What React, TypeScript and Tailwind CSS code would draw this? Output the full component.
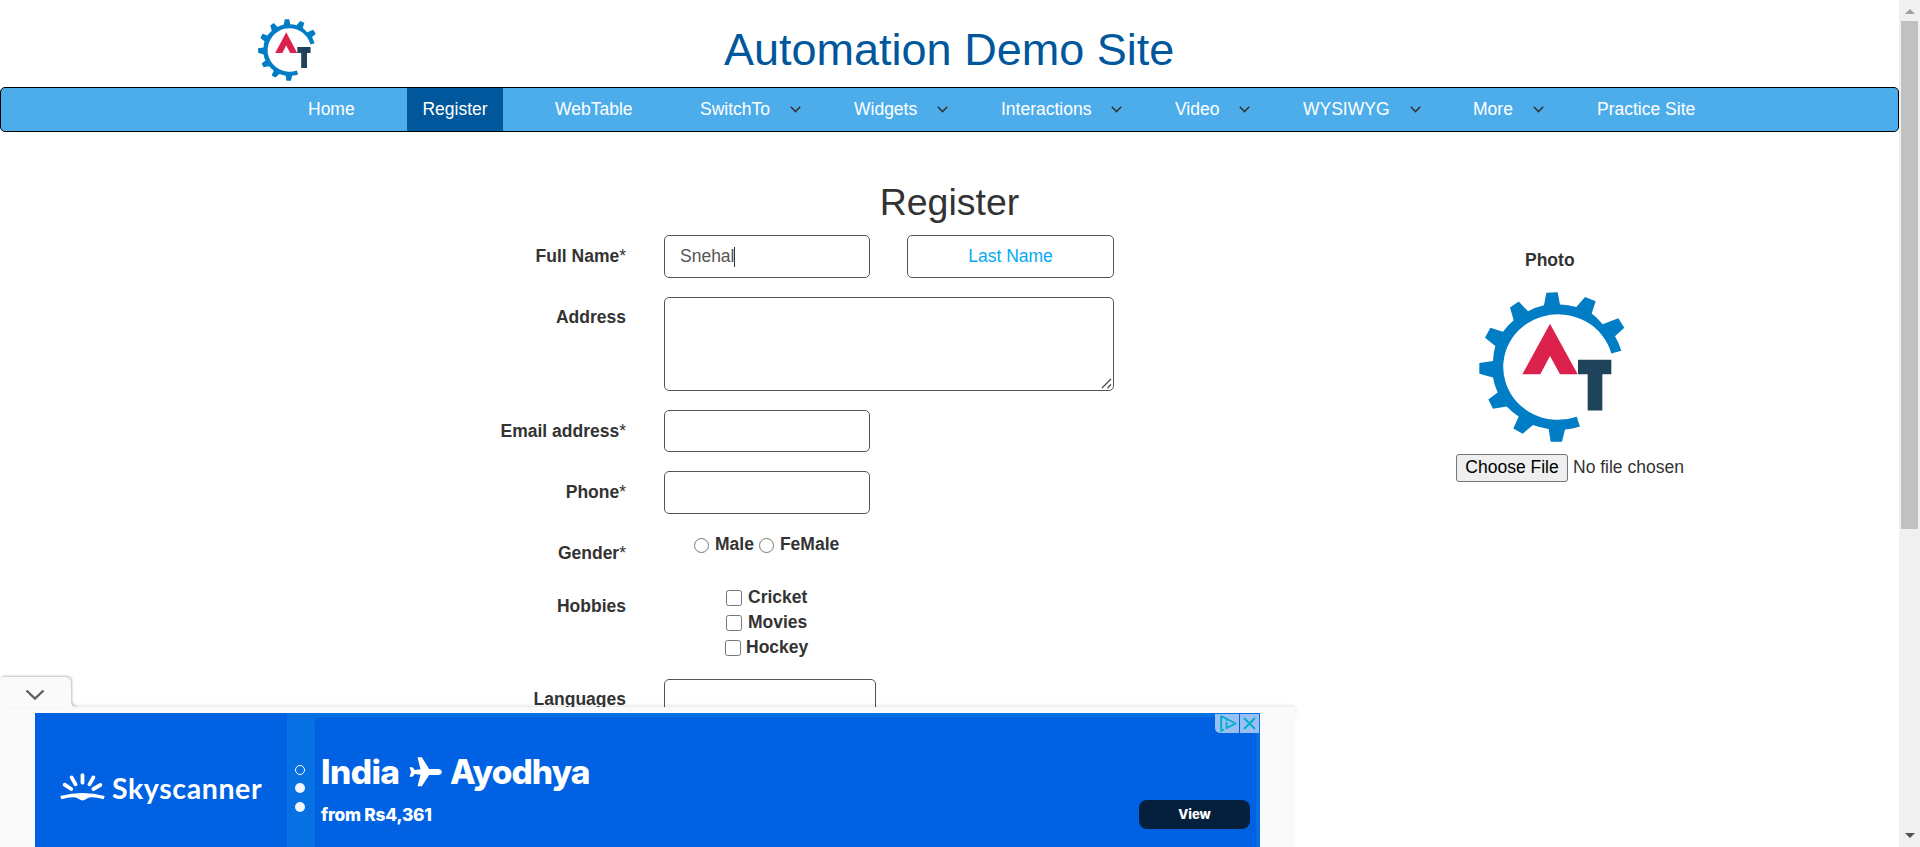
import type { ReactNode } from "react";

function GearLogo({ className }: { className: string }) {
  return (
    <svg viewBox="118 185 438 452" preserveAspectRatio="none" className={className}>
      <path
        fill="#007dc5"
        d="M545 362 A194 189 0 0 0 526 318 L554 293 L536 264 L489 282 A194 189 0 0 0 456 250 L468 213 L436 200 L410 230 A194 189 0 0 0 361 223 L354 186 L320 187 L313 225 A194 189 0 0 0 265 243 L237 214 L211 232 L222 270 A194 189 0 0 0 190 305 L152 293 L136 323 L167 348 A194 189 0 0 0 160 393 L119 399 L119 431 L160 443 A194 189 0 0 0 174 488 L146 509 L160 537 L201 530 A194 189 0 0 0 237 560 L221 596 L249 612 L280 586 A194 189 0 0 0 327 598 L333 636 L367 636 L376 599 A194 189 0 0 0 421 590 L411 561 A165 159 0 1 1 515 370 Z"
      />
      <path fill="#dc214c" d="M331 281 L414 433 H361 L331 378 L302 433 H248 Z" />
      <path fill="#20435c" d="M415 389 H515 V433 H488 V542 H444 V433 H415 Z" />
    </svg>
  );
}

function NavItem({ label, width, menu }: { label: string; width: string; menu?: boolean }) {
  return (
    <div className={`flex shrink-0 items-center gap-[20px] ${width}`}>
      <span>{label}</span>
      {menu && (
        <svg viewBox="0 0 11 7" className="h-[7px] w-[11px]" fill="none" stroke="#333" strokeWidth="1.5">
          <path d="M0.8 0.8 L5.5 5.6 L10.2 0.8" />
        </svg>
      )}
    </div>
  );
}

function Row({ label, star, height, pad = "pt-[9px]", children }: { label: string; star?: boolean; height: string; pad?: string; children: ReactNode }) {
  return (
    <div className={`flex shrink-0 items-start ${height}`}>
      <label className={`mr-[38px] w-[626px] shrink-0 text-right font-bold ${pad}`}>
        {label}
        {star && <span className="font-normal">*</span>}
      </label>
      {children}
    </div>
  );
}

const box = "rounded-[5px] border border-[#555] bg-white";

function Hobby({ label, inset, gap }: { label: string; inset: string; gap: string }) {
  return (
    <label className={`flex h-[25px] items-center font-bold ${inset} ${gap}`}>
      <input type="checkbox" className="h-[16px] w-[16px]" />
      {label}
    </label>
  );
}

function Scrollbar() {
  return (
    <div className="flex w-[21px] shrink-0 flex-col items-center bg-[#f0f0f0]">
      <svg viewBox="0 0 10 5" className="mt-[9px] h-[5px] w-[10px] shrink-0 fill-[#a0a0a0]">
        <path d="M5 0 L10 5 H0 Z" />
      </svg>
      <div className="mt-[7px] h-[508px] w-[17px] bg-[#c1c1c1]" />
      <svg viewBox="0 0 10 5" className="mt-auto mb-[9px] h-[5px] w-[10px] shrink-0 fill-[#505050]">
        <path d="M0 0 H10 L5 5 Z" />
      </svg>
    </div>
  );
}

function Ad() {
  return (
    <div className="absolute bottom-0 left-0 w-[1295px]">
      <svg viewBox="0 0 78 32" className="relative z-10 -mb-px block h-[32px] w-[78px] drop-shadow-[1px_-1px_1px_rgba(0,0,0,0.25)]">
        <path fill="#fafafa" d="M0 6 Q0 1 5 1 H65 Q71 1 71 7 V25 Q71 31 77 32 H0 Z" />
        <path d="M26.5 14.5 L35 22.5 L43.5 14.5" fill="none" stroke="#616161" strokeWidth="2.4" />
      </svg>
      <div className="h-[6px] bg-[#fafafa] shadow-[0_0_5px_rgba(0,0,0,0.18)]" />
      <div className="relative flex h-[134px] bg-[#fafafa] pl-[35px] font-['Inter',sans-serif] text-white">
        <div className="flex w-[252px] shrink-0 items-center bg-[#0062e3] pl-[25px]">
          <svg viewBox="180 305 136 84" className="mt-[13px] h-[28px] w-[45px] shrink-0">
            <g stroke="#fff" strokeWidth="11.5" strokeLinecap="round">
              <path d="M194 340 L214 353 M215 318 L227 339 M248 311 V334 M281 318 L269 339 M302 341 L281 353" />
            </g>
            <path
              fill="#fff"
              d="M181 374 Q214 365 248 365 Q282 365 315 374 L312 384 Q288 377 272 378 Q264 379 258 384 Q248 391 238 384 Q232 379 224 378 Q208 377 184 384 Z"
            />
          </svg>
          <span className="mt-[16px] ml-[7px] font-['Lato',sans-serif] text-[28.5px] leading-[34px] font-bold tracking-[0.6px]">
            Skyscanner
          </span>
        </div>
        <div className="flex w-[973px] bg-[#0770e3] pt-[4px] pr-[4px]">
          <div className="flex w-[28px] shrink-0 flex-col items-center pt-[48px] pr-[2px]">
            <span className="h-[10px] w-[10px] rounded-full border border-white" />
            <span className="mt-[8px] h-[10px] w-[10px] rounded-full bg-[#f1f5fd]" />
            <span className="mt-[9px] h-[10px] w-[10px] rounded-full bg-[#f1f5fd]" />
          </div>
          <div className="relative flex-1 rounded-t-[5px] bg-[#0062e3] pt-[34px] pl-[6px]">
            <div className="flex h-[42px] items-center text-[33.5px] font-extrabold tracking-[-1px]">
              <span className="w-[88px] tracking-[-0.6px]">India</span>
              <svg viewBox="389 81 98 90" className="h-[30px] w-[33px] fill-white">
                <path d="M414 82 H427 L449 117 H477 Q487 119 487 126 Q487 133 477 135 H449 L427 169 H414 L423 134 L406 132 L399 140 H390 L395 126 L390 112 H399 L406 120 L423 118 Z" />
              </svg>
              <span className="ml-[8px]">Ayodhya</span>
            </div>
            <div className="mt-[10px] text-[17.3px] leading-[24px] font-extrabold tracking-[-0.2px]">from Rs4,361</div>
            <div className="absolute right-[6px] bottom-[18px] flex h-[29px] w-[111px] items-center justify-center rounded-[8px] bg-[#05203c] text-[13px] font-extrabold">
              View
            </div>
          </div>
        </div>
        <div className="absolute top-[1px] left-[1215px] flex gap-px">
          <div className="h-[19px] w-[24px] rounded-bl-[5px] bg-[#99bff3]">
            <svg viewBox="0 0 24 19" className="h-[19px] w-[24px]" fill="none" stroke="#00aecd" strokeWidth="1.9">
              <path d="M9 15.5 L6.2 17 V2 L20.5 9.5 L11.5 14.2 V8" strokeLinejoin="round" />
              <path d="M11.5 5 V6.9" />
            </svg>
          </div>
          <div className="h-[19px] w-[19px] bg-[#99bff3]">
            <svg viewBox="0 0 19 19" className="h-[19px] w-[19px]" fill="none" stroke="#00aecd" strokeWidth="1.9">
              <path d="M4 4 L15 15 M15 4 L4 15" />
            </svg>
          </div>
        </div>
      </div>
    </div>
  );
}

export default function App() {
  return (
    <div className="flex h-[847px] w-[1920px] overflow-hidden bg-white font-['Liberation_Sans',Arial,sans-serif] text-[17.5px] leading-[25px] text-[#333]">
      <div className="relative flex h-[847px] w-[1899px] flex-col overflow-hidden">
        <header className="flex h-[87px] shrink-0 items-start pt-[19px] pl-[258px]">
          <GearLogo className="h-[62px] w-[58px]" />
          <h1 className="mt-[6px] ml-[408px] text-[45px] leading-[50px] whitespace-nowrap text-[#00579c]">
            Automation Demo Site
          </h1>
        </header>
        <nav className="flex h-[45px] shrink-0 rounded-[5px] border border-black bg-[#4dadeb] pl-[307px] whitespace-nowrap text-white">
          <NavItem label="Home" width="w-[99px]" />
          <div className="mr-[52px] flex w-[96px] shrink-0 items-center justify-center bg-[#00579c]">Register</div>
          <NavItem label="WebTable" width="w-[145px]" />
          <NavItem label="SwitchTo" width="w-[154px]" menu />
          <NavItem label="Widgets" width="w-[147px]" menu />
          <NavItem label="Interactions" width="w-[174px]" menu />
          <NavItem label="Video" width="w-[128px]" menu />
          <NavItem label="WYSIWYG" width="w-[170px]" menu />
          <NavItem label="More" width="w-[124px]" menu />
          <NavItem label="Practice Site" width="w-[110px]" />
        </nav>
        <h2 className="mt-[50px] h-[53px] shrink-0 text-center text-[37.5px] leading-[41px]">Register</h2>
        <div className="flex">
          <form className="flex w-[1114px] shrink-0 flex-col">
            <Row label="Full Name" star height="h-[62px]">
              <div className={`${box} flex h-[43px] w-[206px] items-center pl-[15px] text-[#555]`}>
                Snehal
                <span className="-ml-px h-[20px] w-px bg-[#333]" />
              </div>
              <div className={`${box} ml-[37px] flex h-[43px] w-[207px] items-center justify-center text-[#03a9f4]`}>
                Last Name
              </div>
            </Row>
            <Row label="Address" height="h-[113px]" pad="pt-[8px]">
              <div className="relative h-[94px] w-[450px]">
                <textarea className={`${box} h-[94px] w-[450px] resize-none`} />
                <svg viewBox="0 0 11 11" className="absolute right-[2px] bottom-[2px] h-[11px] w-[11px]" stroke="#444" strokeWidth="1.2">
                  <path d="M1 10 L10 1 M6.5 10 L10 6.5" />
                </svg>
              </div>
            </Row>
            <Row label="Email address" star height="h-[61px]">
              <input className={`${box} h-[42px] w-[206px]`} />
            </Row>
            <Row label="Phone" star height="h-[61px]">
              <input className={`${box} h-[43px] w-[206px]`} />
            </Row>
            <Row label="Gender" star height="h-[53px]">
              <div className="flex items-center font-bold">
                <input type="radio" className="mt-px mr-[6px] ml-[30px] h-[15px] w-[15px]" />
                Male
                <input type="radio" className="mt-px mr-[6px] ml-[5px] h-[15px] w-[15px]" />
                FeMale
              </div>
            </Row>
            <Row label="Hobbies" height="h-[94px]">
              <div className="flex flex-col">
                <Hobby label="Cricket" inset="ml-[62px]" gap="gap-[6px]" />
                <Hobby label="Movies" inset="ml-[62px]" gap="gap-[6px]" />
                <Hobby label="Hockey" inset="ml-[61px]" gap="gap-[5px]" />
              </div>
            </Row>
            <Row label="Languages" height="h-[62px]" pad="pt-[8px]">
              <div className={`${box} h-[43px] w-[212px]`} />
            </Row>
          </form>
          <aside className="ml-[342px] flex flex-col pt-[13px]">
            <span className="ml-[69px] font-bold">Photo</span>
            <GearLogo className="mt-[19px] ml-[23px] h-[150px] w-[146px]" />
            <div className="mt-[12px] flex items-center gap-[5px] whitespace-nowrap">
              <button className="h-[28px] w-[112px] rounded-[3px] border border-[#767676] bg-[#efefef] pb-[2px] text-black">
                Choose File
              </button>
              <span className="pb-[2px]">No file chosen</span>
            </div>
          </aside>
        </div>
        <Ad />
      </div>
      <Scrollbar />
    </div>
  );
}
